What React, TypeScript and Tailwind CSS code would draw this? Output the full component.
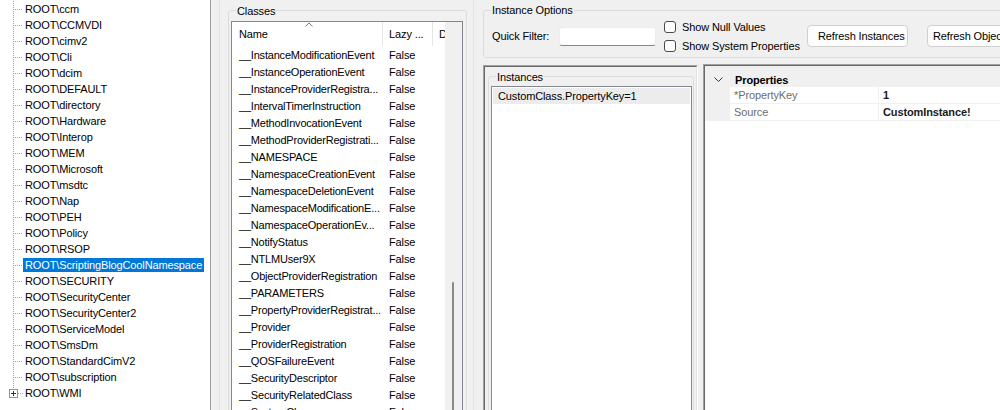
const treeItems = [
  "ccm",
  "CCMVDI",
  "cimv2",
  "Cli",
  "dcim",
  "DEFAULT",
  "directory",
  "Hardware",
  "Interop",
  "MEM",
  "Microsoft",
  "msdtc",
  "Nap",
  "PEH",
  "Policy",
  "RSOP",
  "ScriptingBlogCoolNamespace",
  "SECURITY",
  "SecurityCenter",
  "SecurityCenter2",
  "ServiceModel",
  "SmsDm",
  "StandardCimV2",
  "subscription",
  "WMI",
];

const classes = [
  "__InstanceModificationEvent",
  "__InstanceOperationEvent",
  "__InstanceProviderRegistra...",
  "__IntervalTimerInstruction",
  "__MethodInvocationEvent",
  "__MethodProviderRegistrati...",
  "__NAMESPACE",
  "__NamespaceCreationEvent",
  "__NamespaceDeletionEvent",
  "__NamespaceModificationE...",
  "__NamespaceOperationEv...",
  "__NotifyStatus",
  "__NTLMUser9X",
  "__ObjectProviderRegistration",
  "__PARAMETERS",
  "__PropertyProviderRegistrat...",
  "__Provider",
  "__ProviderRegistration",
  "__QOSFailureEvent",
  "__SecurityDescriptor",
  "__SecurityRelatedClass",
  "__SystemClass",
];

function TreeLines({ last }: { last: boolean }) {
  if (last) {
    return (
      <svg width="23" height="16" className="shrink-0">
        <line x1="13.5" y1="0" x2="13.5" y2="4" stroke="#a0a0a0" strokeDasharray="1 1" />
        <rect x="9.5" y="4.5" width="8" height="8" fill="#fff" stroke="#919191" />
        <line x1="11" y1="8.5" x2="16" y2="8.5" stroke="#333" />
        <line x1="13.5" y1="6" x2="13.5" y2="11" stroke="#333" />
        <line x1="18" y1="8.5" x2="23" y2="8.5" stroke="#a0a0a0" strokeDasharray="1 1" />
      </svg>
    );
  }
  return (
    <svg width="23" height="16" className="shrink-0">
      <line x1="13.5" y1="0" x2="13.5" y2="16" stroke="#a0a0a0" strokeDasharray="1 1" />
      <line x1="15" y1="8.5" x2="23" y2="8.5" stroke="#a0a0a0" strokeDasharray="1 1" />
    </svg>
  );
}

function Checkbox({ label }: { label: string }) {
  return (
    <div className="flex h-[19px] items-center gap-[6px]">
      <span className="h-[12px] w-[12px] rounded-[3px] border border-[#4a4a4a] bg-white" />
      <span>{label}</span>
    </div>
  );
}

export default function App() {
  return (
    <div className="flex h-[410px] w-[1000px] overflow-hidden bg-[#f0f0f0] font-['Liberation_Sans',Arial,sans-serif] text-[11px] leading-[16px] tracking-[-0.12px] text-black">
      {/* namespace tree */}
      <div className="h-full w-[211px] shrink-0 border-r border-[#a0a0a0] bg-white pt-[1px]">
        {treeItems.map((name, i) => (
          <div key={name} className="flex h-[16px] items-center">
            <TreeLines last={i === treeItems.length - 1} />
            <span
              className={
                name === "ScriptingBlogCoolNamespace"
                  ? "h-[14px] whitespace-nowrap bg-[#0078d7] px-[2px] leading-[14px] text-white"
                  : "h-[14px] whitespace-nowrap px-[2px] leading-[14px]"
              }
            >
              {`ROOT\\${name}`}
            </span>
          </div>
        ))}
      </div>
      <div className="h-full w-[9px] shrink-0 border-r border-[#e3e3e3]" />

      {/* classes */}
      <div className="ml-[8px] w-[239px] shrink-0 pt-[10px]">
        <div className="relative h-[420px] rounded-[3px] border border-[#dcdcdc] pl-[2px] pr-[3px] pt-[10px]">
          <span className="absolute left-[7px] top-[-7px] bg-[#f0f0f0] px-[1px] leading-[14px]">Classes</span>
          <div className="flex h-full border border-[#828790] bg-white">
            <div className="w-[213px] overflow-hidden">
              <div className="flex h-[24px] items-center">
                <div className="relative flex h-full w-[151px] items-center border-r border-[#e5e5e5] pl-[7px]">
                  Name
                  <svg width="8" height="5" className="absolute left-[73px] top-[0px]">
                    <polyline points="0.5,4.5 4,1 7.5,4.5" fill="none" stroke="#7a7a7a" />
                  </svg>
                </div>
                <div className="flex h-full w-[50px] items-center border-r border-[#e5e5e5] pl-[6px] whitespace-nowrap">
                  Lazy ...
                </div>
                <div className="flex h-full w-[12px] items-center overflow-hidden pl-[6px]">D</div>
              </div>
              {classes.map((c) => (
                <div key={c} className="flex h-[17px] items-center whitespace-nowrap">
                  <div className="w-[151px] overflow-hidden pl-[7px] tracking-[-0.2px]">{c}</div>
                  <div className="pl-[6px]">False</div>
                </div>
              ))}
            </div>
            <div className="w-[17px] bg-[#f0f0f0] pl-[7px] pt-[260px]">
              <div className="h-[200px] w-[2px] rounded-full bg-[#8a8a8a]" />
            </div>
          </div>
        </div>
      </div>
      <div className="h-full w-[7px] shrink-0 border-r border-[#e3e3e3]" />

      {/* instance side */}
      <div className="flex min-w-0 flex-1 flex-col pl-[9px]">
        <div className="relative mt-[10px] h-[48px] w-[560px] shrink-0 rounded-[3px] border border-[#dcdcdc] pl-[8px]">
          <span className="absolute left-[7px] top-[-8px] bg-[#f0f0f0] px-[1px] leading-[14px]">Instance Options</span>
          <div className="mt-[6px] flex h-[38px] items-center">
            <span className="w-[67px]">Quick Filter:</span>
            <div className="h-[19px] w-[97px] rounded-[3px] border border-[#ececec] border-b-[#868686] bg-white" />
            <div className="ml-[8px] flex w-[143px] flex-col">
              <Checkbox label="Show Null Values" />
              <Checkbox label="Show System Properties" />
            </div>
            <button className="h-[22px] w-[101px] rounded-[4px] border border-[#d0d0d0] bg-[#fdfdfd] pl-[10px] text-left">
              Refresh Instances
            </button>
            <button className="ml-[19px] h-[22px] w-[110px] rounded-[4px] border border-[#d0d0d0] bg-[#fdfdfd] pl-[5px] text-left">
              Refresh Objects
            </button>
          </div>
        </div>

        <div className="mt-[6px] flex h-[400px] shrink-0">
          {/* instances */}
          <div className="mt-[1px] w-[215px] shrink-0 border-l border-r border-t border-l-[#a0a0a0] border-r-white border-t-[#a0a0a0]">
            <div className="h-full border-l border-r border-t border-l-[#696969] border-r-[#e3e3e3] border-t-[#696969] pl-[3px] pr-[2px] pt-[9px]">
              <div className="relative h-full rounded-[3px] border border-[#dcdcdc] pl-[2px] pr-[1px] pt-[9px]">
                <span className="absolute left-[7px] top-[-7px] bg-[#f0f0f0] px-[1px] leading-[14px]">Instances</span>
                <div className="h-full border border-[#828790] bg-white p-[1px]">
                  <div className="h-[16px] bg-[#ececec] pl-[5px] leading-[16px]">CustomClass.PropertyKey=1</div>
                </div>
              </div>
            </div>
          </div>

          {/* properties */}
          <div className="ml-[5px] w-[320px] shrink-0 border-l border-t border-[#a0a0a0]">
            <div className="h-full border-l border-t border-[#696969] bg-white">
              <div className="flex h-[21px] items-center bg-[#f0f0f0] pt-[7px]">
                <div className="w-[30px] pl-[9px]">
                  <svg width="9" height="6" className="block">
                    <polyline points="0.5,0.5 4.5,4.5 8.5,0.5" fill="none" stroke="#333" />
                  </svg>
                </div>
                <span className="font-bold">Properties</span>
              </div>
              {[
                ["*PropertyKey", "1"],
                ["Source", "CustomInstance!"],
              ].map(([k, v]) => (
                <div key={k} className="flex h-[17px]">
                  <div className="w-[25px] bg-[#f0f0f0]" />
                  <div className="w-[149px] border-b border-r border-[#f0f0f0] pl-[4px] text-[#6d6d6d]">{k}</div>
                  <div className="flex-1 border-b border-[#f0f0f0] pl-[4px] font-bold text-[#1a1a1a]">{v}</div>
                </div>
              ))}
            </div>
          </div>
        </div>
      </div>
    </div>
  );
}
